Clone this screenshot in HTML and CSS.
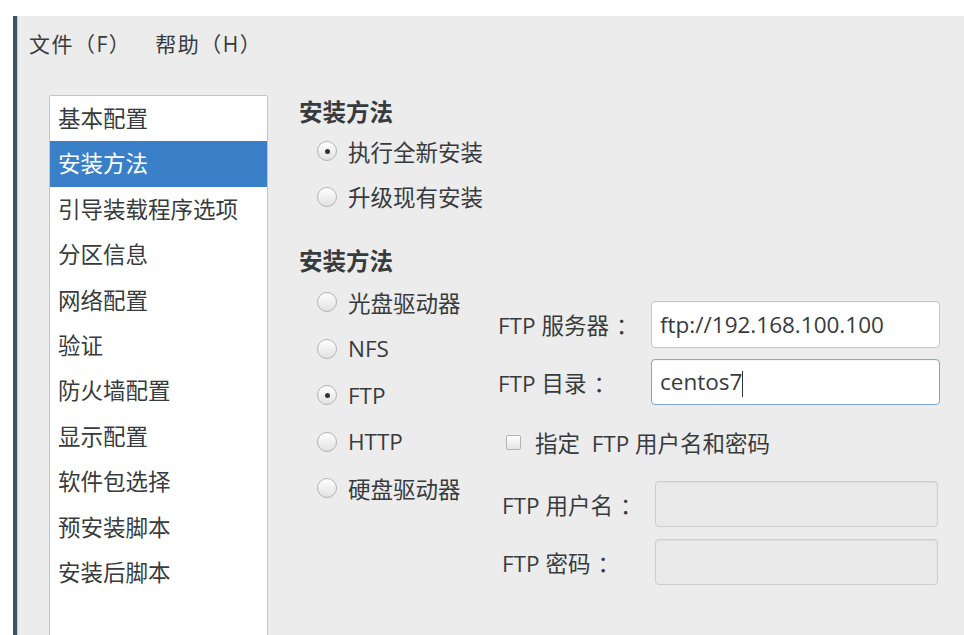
FILE: index.html
```html
<!DOCTYPE html>
<html lang="zh-CN">
<head>
<meta charset="utf-8">
<link rel="stylesheet" href="styles.css">
</head>
<body>
<div class="window">
  <div class="menubar">
    <span class="menu">文件（F）</span>
    <span class="menu">帮助（H）</span>
  </div>
  <div class="main">
    <ul class="sidebar">
      <li>基本配置</li>
      <li class="selected">安装方法</li>
      <li>引导装载程序选项</li>
      <li>分区信息</li>
      <li>网络配置</li>
      <li>验证</li>
      <li>防火墙配置</li>
      <li>显示配置</li>
      <li>软件包选择</li>
      <li>预安装脚本</li>
      <li>安装后脚本</li>
    </ul>
    <div class="pane">
      <div class="heading">安装方法</div>
      <div class="radio-row"><span class="radio checked"></span>执行全新安装</div>
      <div class="radio-row"><span class="radio"></span>升级现有安装</div>
      <div class="heading second">安装方法</div>
      <div class="lower">
        <div class="methods">
          <div class="radio-row tall"><span class="radio"></span>光盘驱动器</div>
          <div class="radio-row tall"><span class="radio"></span>NFS</div>
          <div class="radio-row tall"><span class="radio checked"></span>FTP</div>
          <div class="radio-row tall"><span class="radio"></span>HTTP</div>
          <div class="radio-row tall"><span class="radio"></span>硬盘驱动器</div>
        </div>
        <div class="form">
          <div class="fields">
            <label class="label">FTP 服务器<span class="colon">：</span></label>
            <div class="input">ftp://192.168.100.100</div>
            <label class="label">FTP 目录<span class="colon">：</span></label>
            <div class="input focused">centos7<span class="caret"></span></div>
          </div>
          <div class="check-row"><span class="checkbox"></span>指定&nbsp; FTP 用户名和密码</div>
          <div class="fields sub">
            <label class="label">FTP 用户名<span class="colon">：</span></label>
            <div class="input disabled"></div>
            <label class="label">FTP 密码<span class="colon">：</span></label>
            <div class="input disabled"></div>
          </div>
        </div>
      </div>
    </div>
  </div>
</div>
</body>
</html>
```
FILE: styles.css
```css
html, body {
  margin: 0;
  padding: 0;
  background: #ffffff;
  height: 100%;
  overflow: hidden;
}
body {
  font-family: "Open Sans", "Noto Sans CJK SC", sans-serif;
  color: #383b3d;
  font-size: 22.5px;
}
.window {
  margin-top: 16px;
  margin-left: 13px;
  height: 619px;
  background: #ececec;
  border-left: 4px solid #3f5261;
  box-shadow: inset 1px 0 0 #c9cdd0;
  overflow: hidden;
}
.menubar {
  display: flex;
  gap: 24px;
  padding: 14px 0 0 12px;
  height: 30px;
  line-height: 28px;
  font-size: 21px;
  letter-spacing: 1.5px;
}
.main {
  display: flex;
  margin-top: 35px;
  padding-left: 32px;
}
.sidebar {
  list-style: none;
  margin: 0;
  padding: 0;
  width: 217px;
  height: 600px;
  background: #ffffff;
  border: 1px solid #c4c4c4;
  border-radius: 2px;
  flex: none;
}
.sidebar li {
  height: 45.4px;
  line-height: 45.4px;
  padding-left: 8px;
  white-space: nowrap;
}
.sidebar li.selected {
  background: #3a80c9;
  color: #ffffff;
}
.pane {
  margin-left: 31px;
  padding-top: 2px;
  flex: 1;
}
.heading {
  font-weight: bold;
  font-size: 23.5px;
  height: 30px;
  line-height: 30px;
  margin-bottom: 1.5px;
}
.heading.second {
  margin-top: 26.5px;
  margin-bottom: 3px;
}
.radio-row {
  display: flex;
  align-items: center;
  height: 45.5px;
  padding-left: 18px;
  gap: 11px;
  white-space: nowrap;
}
.radio-row.tall {
  height: 46.5px;
}
.radio {
  width: 18px;
  height: 18px;
  border-radius: 50%;
  border: 1px solid #b3b3b3;
  background: linear-gradient(#ffffff, #e2e2e2);
  box-sizing: content-box;
  position: relative;
  flex: none;
}
.radio.checked::after {
  content: "";
  position: absolute;
  left: 6.5px;
  top: 6.5px;
  width: 5px;
  height: 5px;
  border-radius: 50%;
  background: #2e3436;
}
.lower {
  display: flex;
}
.methods {
  width: 199px;
  flex: none;
}
.form {
  padding-top: 22px;
}
.fields {
  display: grid;
  grid-template-columns: 153px 289px;
  row-gap: 11px;
  align-items: center;
}
.fields.sub {
  grid-template-columns: 153px 283px;
  padding-left: 4px;
  row-gap: 12px;
  margin-top: 24px;
}
.label {
  white-space: nowrap;
  font-size: 22.5px;
}
.colon {
  margin-left: 7px;
}
.input {
  height: 45px;
  line-height: 45px;
  border: 1px solid #c6c6c6;
  border-radius: 4px;
  background: #ffffff;
  padding-left: 8px;
  font-size: 22.5px;
  color: #383b3d;
  white-space: nowrap;
  box-shadow: inset 0 1px 1px rgba(0,0,0,0.04);
}
.input.focused {
  border-color: #7da6d9;
  height: 44px;
  line-height: 44px;
}
.caret {
  display: inline-block;
  width: 1px;
  height: 26px;
  background: #2e3436;
  vertical-align: middle;
}
.fields.sub .input {
  height: 44px;
}
.input.disabled {
  background: #e9e9e9;
  border-color: #cdcdcd;
}
.check-row {
  display: flex;
  align-items: center;
  height: 30px;
  margin-top: 22px;
  padding-left: 8px;
  gap: 14px;
  white-space: nowrap;
}
.checkbox {
  width: 13px;
  height: 13px;
  border: 1px solid #b3b3b3;
  border-radius: 2px;
  background: linear-gradient(#ffffff, #e4e4e4);
  flex: none;
}
```
